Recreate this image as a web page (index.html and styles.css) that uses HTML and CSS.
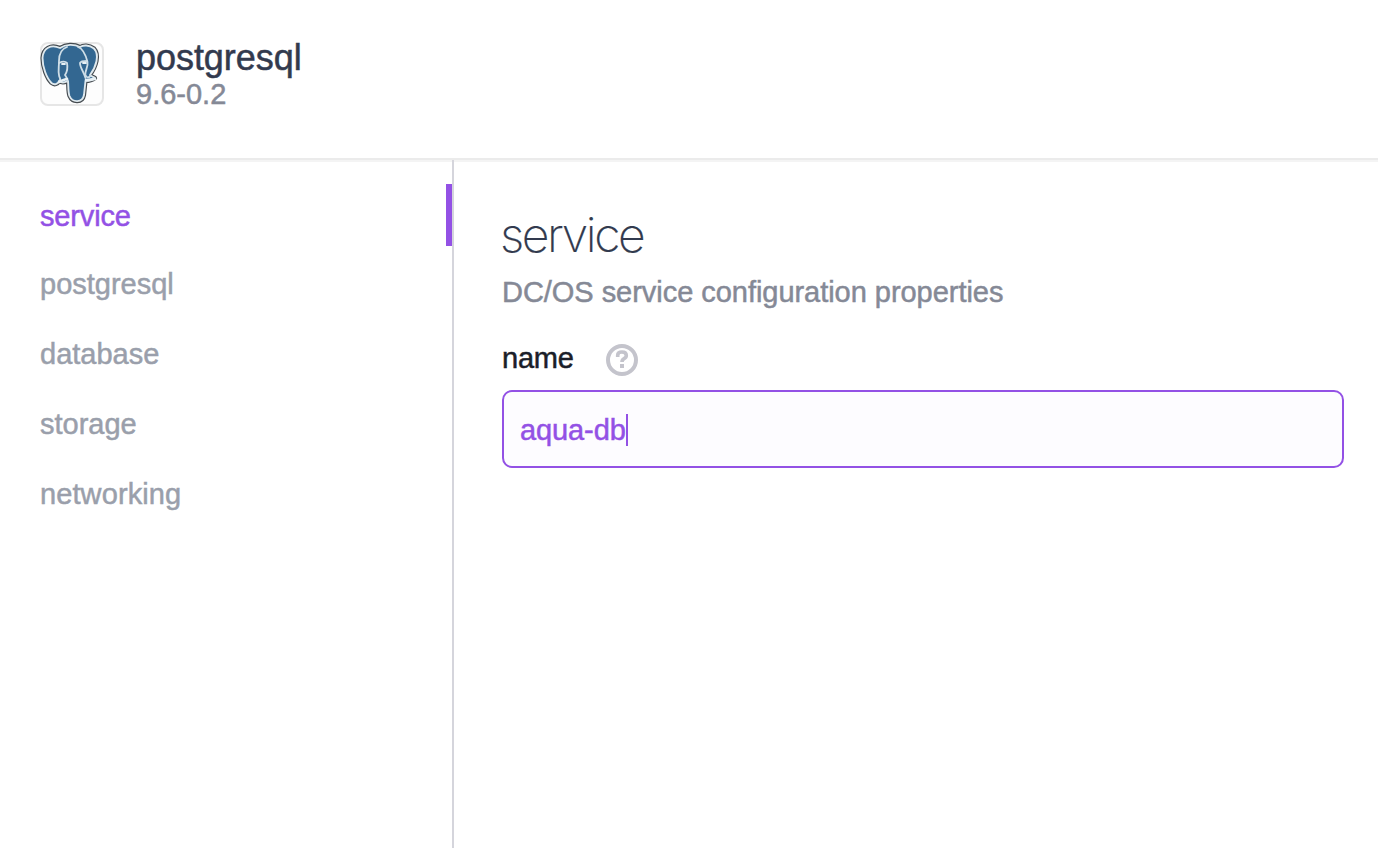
FILE: index.html
```
<!DOCTYPE html>
<html lang="en">
<head>
<meta charset="utf-8">
<title>postgresql configuration</title>
<link rel="stylesheet" href="styles.css">
</head>
<body>
<header class="header">
  <svg class="logo" viewBox="0 0 64 64" aria-hidden="true">
    <rect x="1" y="1" width="62" height="62" rx="7" fill="#fdfdfd" stroke="#e6e6e6" stroke-width="2"/>
    <g stroke-linejoin="round" stroke-linecap="round">
      <path class="elephant-edge" d="M20 6C11 2 3 6 2.500 16c0 9 4 20 9 25 3 2.500 6 1 8-2 3 3 6 1 8.500 0 .5 5 0 11 1.500 15 3 7 13 7 14.500-1l1.500-14c4 0 7-1 9.500-3-2-1.500-4-1.500-5-3C56 25 60 13 54 6.500 49 2.500 43 3 40 5 34 2 26 2 20 6Z" fill="#336791" stroke="#454b50" stroke-width="4.200"/>
      <path d="M20 6C11 2 3 6 2.500 16c0 9 4 20 9 25 3 2.500 6 1 8-2 3 3 6 1 8.500 0 .5 5 0 11 1.500 15 3 7 13 7 14.500-1l1.500-14c4 0 7-1 9.500-3-2-1.500-4-1.500-5-3C56 25 60 13 54 6.500 49 2.500 43 3 40 5 34 2 26 2 20 6Z" fill="#336791" stroke="#dfe9ee" stroke-width="1.900"/>
      <g fill="none" stroke="#cfdee7" stroke-width="1.800">
        <path d="M27 5c-6 2-8 8-8 14 0 6-1 10 0 14 0 3 3 4 0 6"/>
        <path d="M38 5c6 2 8 9 9.500 15 1 5-3 9-2 13 1 3 3 3 5 1"/>
        <path d="M19 21c2-1 6-2 8 0 1 5 0 9-2 12 2 3 3 4 2.500 6"/>
        <path d="M47 19c-3 0-6 0-7 2 0 5 4 9 5.500 15"/>
      </g>
      <path d="M22 22h3M43 21h3" stroke="#e8f1f5" stroke-width="1.800"/>
      <path d="M19 40c2-2 5-2 8-3M46 38c4 0 7-1 9-1" stroke="#e8f1f5" stroke-width="2.600" fill="none"/>
    </g>
  </svg>
  <div class="heading">
    <div class="name">postgresql</div>
    <div class="version">9.6-0.2</div>
  </div>
</header>
<div class="layout">
  <nav class="sidebar">
    <a class="tab tab-active">service</a>
    <a class="tab">postgresql</a>
    <a class="tab">database</a>
    <a class="tab">storage</a>
    <a class="tab tab-wide">networking</a>
  </nav>
  <main class="content">
    <h1 class="title">service</h1>
    <p class="description">DC/OS service configuration properties</p>
    <div class="label-row">
      <span class="label">name</span>
      <svg class="help" viewBox="0 0 32 32" aria-hidden="true">
        <circle cx="16" cy="16" r="14" fill="none" stroke="#c4c4cc" stroke-width="4"/>
        <path d="M11.700 13V11.200Q11.700 8 16 8t4.300 3.400q0 2-2.200 3.200Q16 15.800 16 18" fill="none" stroke="#c4c4cc" stroke-width="3.600"/>
        <path d="M14 20h4v4h-4z" fill="#c4c4cc"/>
      </svg>
    </div>
    <div class="field"><span class="value">aqua-db</span><span class="caret"></span></div>
  </main>
</div>
</body>
</html>
```
FILE: styles.css
```
* { box-sizing: border-box; }
body {
  margin: 0;
  height: 848px;
  display: flex;
  flex-direction: column;
  overflow: hidden;
  background: #fff;
  font: 29px/34px "Liberation Sans", Arial, sans-serif;
  -webkit-text-stroke: 0.5px currentColor;
}
.header {
  height: 160px;
  flex: none;
  display: flex;
  padding: 42px 40px 0;
  border-bottom: 2px solid #ebebeb;
}
.logo { width: 64px; height: 64px; flex: none; }
.heading { margin-left: 32px; margin-top: -4px; }
.name { font-size: 36px; line-height: 40px; color: #323a4e; letter-spacing: -0.05px; }
.version { margin-top: -1px; color: #858996; }
.layout { flex: 1; display: flex; box-shadow: inset 0 2px #f4f4f4; }
.sidebar {
  width: 454px;
  border-right: 2px solid #d5d5dc;
  padding-top: 24px;
  display: flex;
  flex-direction: column;
}
.tab {
  height: 34px;
  margin-bottom: 36px;
  padding-left: 40px;
  color: #9a9fab;
}
.tab-wide { letter-spacing: 0.1px; }
.tab-active {
  height: 62px;
  margin-bottom: 21px;
  padding-top: 15px;
  border-right: 6px solid #9351e5;
  color: #9351e5;
  letter-spacing: -0.15px;
}
.content { flex: 1; padding: 47px 34px 0 48px; }
.title {
  margin: 0 0 0 -2px;
  font: 200 48px/56px Inter, "Liberation Sans", sans-serif;
  letter-spacing: -2.4px;
  color: #323a4e;
  -webkit-text-stroke: 0.2px currentColor;
}
.description { margin: 12px 0 0; color: #858996; letter-spacing: -0.04px; }
.label-row { display: flex; height: 34px; margin-top: 32px; }
.label { width: 104px; color: #1b1e29; letter-spacing: -0.2px; }
.help { width: 32px; height: 32px; margin-top: 3px; }
.field {
  display: flex;
  align-items: center;
  height: 78px;
  margin-top: 15px;
  padding: 2px 16px 0;
  border: 2px solid #9351e5;
  border-radius: 10px;
  background: #fdfcff;
  color: #9351e5;
}
.value { letter-spacing: -0.1px; }
.caret { width: 2px; height: 32px; background: #9351e5; }
```
